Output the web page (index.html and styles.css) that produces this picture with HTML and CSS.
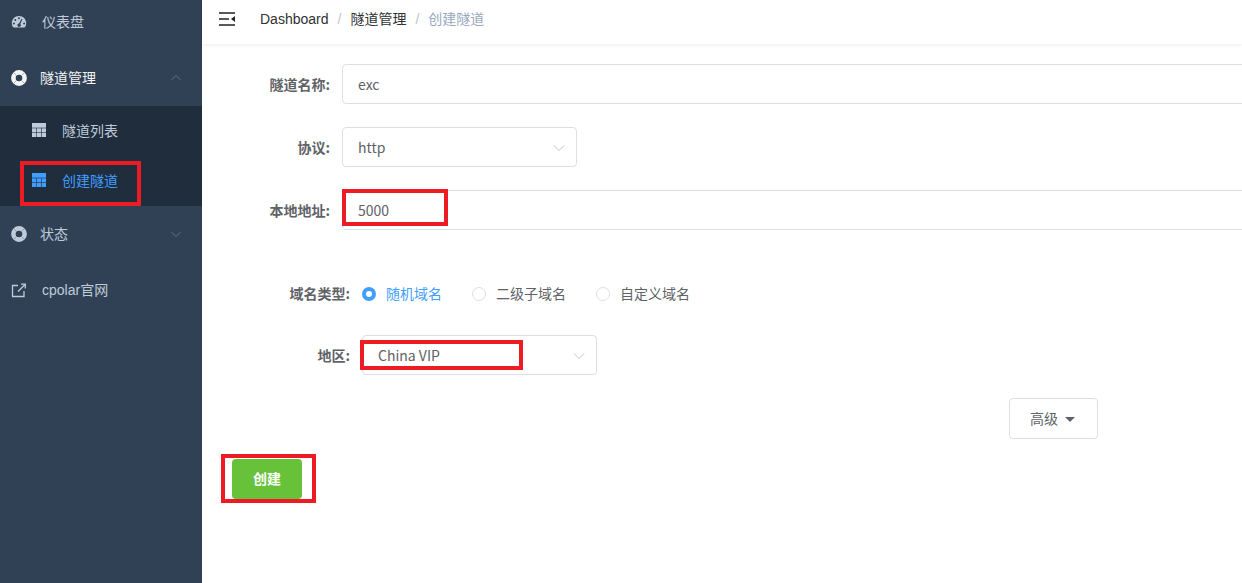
FILE: index.html
```html
<!DOCTYPE html>
<html lang="zh">
<head>
<meta charset="utf-8">
<title>创建隧道</title>
<link rel="stylesheet" href="styles.css">
</head>
<body>
<div class="app">
  <aside class="sidebar">
    <div class="menu-item first">
      <svg class="ico" viewBox="0 0 16 16"><path fill="currentColor" fill-rule="evenodd" d="M8 2C3.900 2 .8 5.200 .8 9.200c0 1.500.4 2.800 1.100 3.900.2.300.5.400.8.400h10.600c.3 0 .6-.1.8-.4.700-1.100 1.100-2.400 1.100-3.900C15.200 5.200 12.100 2 8 2zM8 3.300a1 1 0 1 1 0 2 1 1 0 0 1 0-2zM4.300 4.900a1 1 0 1 1 0 2 1 1 0 0 1 0-2zM2.900 8.400a1 1 0 1 1 0 2 1 1 0 0 1 0-2zm10.200 0a1 1 0 1 1 0 2 1 1 0 0 1 0-2zM11.400 5.200 9.300 9.900a1.700 1.700 0 1 1-1.300-.4l2.500-4.700z"/></svg>
      <span class="label wide">仪表盘</span>
    </div>
    <div class="menu-item open">
      <svg class="ico" viewBox="0 0 16 16"><circle cx="8" cy="8" r="5.600" fill="none" stroke="currentColor" stroke-width="4.600"/><path d="M3 3l2.500 2.500M13 3l-2.500 2.500M3 13l2.500-2.500M13 13l-2.500-2.500" stroke="#8a97a8" stroke-width=".7"/></svg>
      <span class="label">隧道管理</span>
      <svg class="chev" viewBox="0 0 12 8"><path d="M1.500 6 6 1.500 10.500 6" fill="none" stroke="currentColor"/></svg>
    </div>
    <div class="submenu">
      <div class="sub-item">
        <svg class="ico tbl" viewBox="0 0 14 14"><path fill="currentColor" d="M0 0h14v14H0z"/><path d="M0 5h14M0 9.500h14M4.500 5v9M9.500 5v9" stroke="#1f2d3d" stroke-width=".6" fill="none"/></svg>
        <span class="label wide">隧道列表</span>
      </div>
      <div class="sub-item active">
        <svg class="ico tbl" viewBox="0 0 14 14"><path fill="currentColor" d="M0 0h14v14H0z"/><path d="M0 5h14M0 9.500h14M4.500 5v9M9.500 5v9" stroke="#1f2d3d" stroke-width=".6" fill="none"/></svg>
        <span class="label wide">创建隧道</span>
      </div>
    </div>
    <div class="menu-item">
      <svg class="ico" viewBox="0 0 16 16"><circle cx="8" cy="8" r="5.600" fill="none" stroke="currentColor" stroke-width="4.600"/><path d="M3 3l2.500 2.500M13 3l-2.500 2.500M3 13l2.500-2.500M13 13l-2.500-2.500" stroke="#7d8a9b" stroke-width=".7"/></svg>
      <span class="label">状态</span>
      <svg class="chev" viewBox="0 0 12 8"><path d="M1.500 2 6 6.500 10.500 2" fill="none" stroke="currentColor"/></svg>
    </div>
    <div class="menu-item">
      <svg class="ico" viewBox="0 0 16 16"><path d="M7 3.500H1.500v11H13V9" fill="none" stroke="currentColor" stroke-width="1.300"/><path d="M7 9.500 13.500 3M10 2.200h4.300v4.300" fill="none" stroke="currentColor" stroke-width="1.300"/></svg>
      <span class="label wide">cpolar官网</span>
    </div>
  </aside>

  <main class="main">
    <header class="navbar">
      <svg class="hamburger" viewBox="0 0 16 14"><path d="M0 1h16M0 7h10M0 13h16" stroke="#1f2329" stroke-width="1.500" fill="none"/><path d="M16 4v6l-4-3z" fill="#1f2329"/></svg>
      <nav class="crumbs">
        <span>Dashboard</span><i>/</i><span>隧道管理</span><i>/</i><span class="cur">创建隧道</span>
      </nav>
    </header>

    <form class="form">
      <div class="row">
        <label class="lbl">隧道名称:</label>
        <div class="input full">exc</div>
      </div>
      <div class="row">
        <label class="lbl">协议:</label>
        <div class="input select">http
          <svg class="sel-chev" viewBox="0 0 12 8"><path d="M1 1.500 6 6.500 11 1.500" fill="none" stroke="currentColor"/></svg>
        </div>
      </div>
      <div class="row">
        <label class="lbl">本地地址:</label>
        <div class="input full">5000</div>
        <span class="mark mark-port"></span>
      </div>
      <div class="row radios">
        <label class="lbl">域名类型:</label>
        <div class="radio on"><span class="dot"></span>随机域名</div>
        <div class="radio"><span class="dot"></span>二级子域名</div>
        <div class="radio"><span class="dot"></span>自定义域名</div>
      </div>
      <div class="row region">
        <label class="lbl">地区:</label>
        <div class="input select">China VIP
          <svg class="sel-chev" viewBox="0 0 12 8"><path d="M1 1.500 6 6.500 11 1.500" fill="none" stroke="currentColor"/></svg>
        </div>
        <span class="mark mark-region"></span>
      </div>
      <div class="adv-row">
        <button type="button" class="btn">高级<span class="caret"></span></button>
      </div>
      <div class="submit-row">
        <button type="button" class="btn-create">创建</button>
        <span class="mark mark-create"></span>
      </div>
    </form>
  </main>
  <span class="mark mark-menu"></span>
</div>
</body>
</html>
```
FILE: styles.css
```css
* { box-sizing: border-box; }
html, body { margin: 0; height: 100%; overflow: hidden; background: #fff; }
body { font-family: "Liberation Sans", "Noto Sans CJK SC", sans-serif; font-size: 14px; }
.app { display: flex; height: 583px; position: relative; overflow: hidden; }

.sidebar { width: 202px; flex: none; background: #304156; color: #bfcbd9; overflow: hidden; }
.menu-item { height: 56px; display: flex; align-items: center; padding-left: 11px; position: relative; font-size: 14px; }
.menu-item.first { margin-top: -6px; }
.menu-item.open { color: #f4f4f5; }
.ico { width: 16px; height: 16px; flex: none; }
.label { margin-left: 13px; line-height: 20px; }
.label.wide { margin-left: 15px; }
.chev { position: absolute; left: 170px; top: 24px; width: 12px; height: 8px; color: #5f6f82; }
.submenu { background: #1f2d3d; height: 100px; }
.sub-item { height: 50px; display: flex; align-items: center; padding-left: 32px; font-size: 14px; }
.sub-item .label.wide { margin-left: 16px; }
.sub-item .tbl { width: 14px; height: 14px; margin-top: -2px; }
.sub-item.active { color: #409eff; }

.main { flex: 1; min-width: 0; }
.navbar { height: 44px; display: flex; align-items: center; padding-left: 17px; box-shadow: 0 1px 4px rgba(0, 21, 41, .08); }
.hamburger { width: 16px; height: 14px; margin-top: -7px; flex: none; }
.crumbs { margin-left: 25px; font-size: 14px; color: #303133; margin-top: -6px; display: flex; align-items: baseline; line-height: 20px; }
.crumbs i { font-style: normal; color: #c0c4cc; margin: 0 9px; }
.crumbs .cur { color: #97a8be; }

.form { padding-top: 20px; color: #606266; font-family: "Noto Sans CJK SC", sans-serif; }
.row { display: flex; align-items: center; height: 40px; margin-bottom: 23px; }
.lbl { width: 140px; padding-right: 12px; text-align: right; font-weight: 700; font-size: 14px; flex: none; }
.input { height: 40px; border: 1px solid #dcdfe6; border-radius: 4px; padding: 0 15px; display: flex; align-items: center; font-size: 14px; position: relative; background: #fff; }
.input.full { width: 1000px; flex: none; }
.input.select { width: 235px; flex: none; }
.sel-chev { position: absolute; right: 11px; top: 16px; width: 12px; height: 8px; color: #c0c4cc; }

.radios { margin-top: 43px; margin-bottom: 22px; }
.radios .lbl, .region .lbl { width: 160px; }
.radio { display: flex; align-items: center; font-size: 14px; margin-right: 30px; }
.radio .dot { width: 14px; height: 14px; border: 1px solid #dcdfe6; border-radius: 50%; margin-right: 10px; background: #fff; margin-top: 1px; }
.radio.on { color: #409eff; }
.radio.on .dot { border: 4px solid #409eff; }

.adv-row { padding-left: 807px; height: 41px; }
.btn { width: 89px; height: 41px; background: #fff; border: 1px solid #dcdfe6; border-radius: 4px; color: #606266; font: 14px "Noto Sans CJK SC", sans-serif; padding: 0 2px 2px 0; }
.caret { display: inline-block; border: 5px solid transparent; border-top-color: #606266; border-bottom: 0; margin-left: 7px; vertical-align: 2px; }
.submit-row { padding: 20px 0 0 30px; }
.btn-create { width: 70px; height: 40px; background: #67c23a; border: 0; border-radius: 4px; color: #fff; font: 700 14px "Noto Sans CJK SC", sans-serif; padding: 0 0 2px; display: block; }

.mark { position: absolute; border: 4px solid #ed1c24; pointer-events: none; }
.mark-menu { left: 20px; top: 161px; width: 121px; height: 45px; }
.mark-port { left: 342px; top: 189px; width: 106px; height: 37px; }
.mark-region { left: 360px; top: 340px; width: 163px; height: 30px; }
.mark-create { left: 221px; top: 454px; width: 95px; height: 49px; }
```
